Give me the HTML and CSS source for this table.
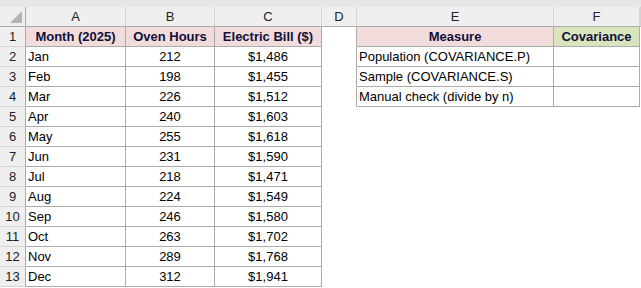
FILE: index.html
```html
<!DOCTYPE html>
<html>
<head>
<meta charset="utf-8">
<link rel="stylesheet" href="styles.css">
</head>
<body>
<div class="band"></div>
<div class="sheet">
  <div class="corner"><span class="tri"></span></div>
  <div class="ch">A</div><div class="ch">B</div><div class="ch">C</div><div class="ch">D</div><div class="ch">E</div><div class="ch">F</div><div class="ch"></div>

  <div class="rh">1</div>
  <div class="b hd pink">Month (2025)</div><div class="b hd pink">Oven Hours</div><div class="b hd pink">Electric Bill ($)</div><div class="c edge"></div><div class="b hd pink">Measure</div><div class="b hd green">Covariance</div><div class="c"></div>

  <div class="rh">2</div>
  <div class="b l">Jan</div><div class="b m">212</div><div class="b m">$1,486</div><div class="c edge"></div><div class="b l">Population (COVARIANCE.P)</div><div class="b"></div><div class="c"></div>

  <div class="rh">3</div>
  <div class="b l">Feb</div><div class="b m">198</div><div class="b m">$1,455</div><div class="c edge"></div><div class="b l">Sample (COVARIANCE.S)</div><div class="b"></div><div class="c"></div>

  <div class="rh">4</div>
  <div class="b l">Mar</div><div class="b m">226</div><div class="b m">$1,512</div><div class="c edge"></div><div class="b l">Manual check (divide by n)</div><div class="b"></div><div class="c"></div>

  <div class="rh">5</div>
  <div class="b l">Apr</div><div class="b m">240</div><div class="b m">$1,603</div><div class="c"></div><div class="c"></div><div class="c"></div><div class="c"></div>

  <div class="rh">6</div>
  <div class="b l">May</div><div class="b m">255</div><div class="b m">$1,618</div><div class="c"></div><div class="c"></div><div class="c"></div><div class="c"></div>

  <div class="rh">7</div>
  <div class="b l">Jun</div><div class="b m">231</div><div class="b m">$1,590</div><div class="c"></div><div class="c"></div><div class="c"></div><div class="c"></div>

  <div class="rh">8</div>
  <div class="b l">Jul</div><div class="b m">218</div><div class="b m">$1,471</div><div class="c"></div><div class="c"></div><div class="c"></div><div class="c"></div>

  <div class="rh">9</div>
  <div class="b l">Aug</div><div class="b m">224</div><div class="b m">$1,549</div><div class="c"></div><div class="c"></div><div class="c"></div><div class="c"></div>

  <div class="rh">10</div>
  <div class="b l">Sep</div><div class="b m">246</div><div class="b m">$1,580</div><div class="c"></div><div class="c"></div><div class="c"></div><div class="c"></div>

  <div class="rh">11</div>
  <div class="b l">Oct</div><div class="b m">263</div><div class="b m">$1,702</div><div class="c"></div><div class="c"></div><div class="c"></div><div class="c"></div>

  <div class="rh">12</div>
  <div class="b l">Nov</div><div class="b m">289</div><div class="b m">$1,768</div><div class="c"></div><div class="c"></div><div class="c"></div><div class="c"></div>

  <div class="rh">13</div>
  <div class="b l">Dec</div><div class="b m">312</div><div class="b m">$1,941</div><div class="c"></div><div class="c"></div><div class="c"></div><div class="c"></div>
</div>
</body>
</html>
```
FILE: styles.css
```css
html, body {
  margin: 0;
  padding: 0;
  background: #ffffff;
}
body {
  width: 641px;
  height: 288px;
  overflow: hidden;
  font-family: "Liberation Sans", Arial, sans-serif;
  font-size: 13px;
  color: #000000;
}
.band {
  height: 7px;
  background: #e6e6e6;
}
.sheet {
  display: grid;
  grid-template-columns: 26px 100px 89px 107px 35px 197px 86px 1px;
  grid-auto-rows: 20px;
}
.sheet > div {
  box-sizing: border-box;
  border-right: 1px solid transparent;
  border-bottom: 1px solid transparent;
  white-space: nowrap;
  overflow: hidden;
  display: flex;
  align-items: flex-end;
  padding-bottom: 2px;
  line-height: 15px;
}
.corner {
  background: #efefef;
  position: relative;
  border-right-color: #ababab !important;
  border-bottom-color: #ababab !important;
}
.tri {
  position: absolute;
  right: 3px;
  bottom: 3px;
  width: 0;
  height: 0;
  border-left: 12px solid transparent;
  border-bottom: 12px solid #b4b4b4;
}
.ch {
  background: #efefef;
  border-right-color: #d4d4d4 !important;
  border-bottom-color: #ababab !important;
  justify-content: center;
  color: #222222;
}
.rh {
  background: #efefef;
  border-right-color: #ababab !important;
  border-bottom-color: #d4d4d4 !important;
  justify-content: center;
  color: #222222;
}
.b {
  border-right-color: #ababab !important;
  border-bottom-color: #ababab !important;
}
.edge {
  border-right-color: #ababab !important;
}
.l {
  justify-content: flex-start;
  padding-left: 2px;
}
.m {
  justify-content: center;
}
.hd {
  justify-content: center;
  font-weight: bold;
  color: #10103a;
}
.pink {
  background: #f2dcdb;
}
.green {
  background: #d8e4bc;
}
```
